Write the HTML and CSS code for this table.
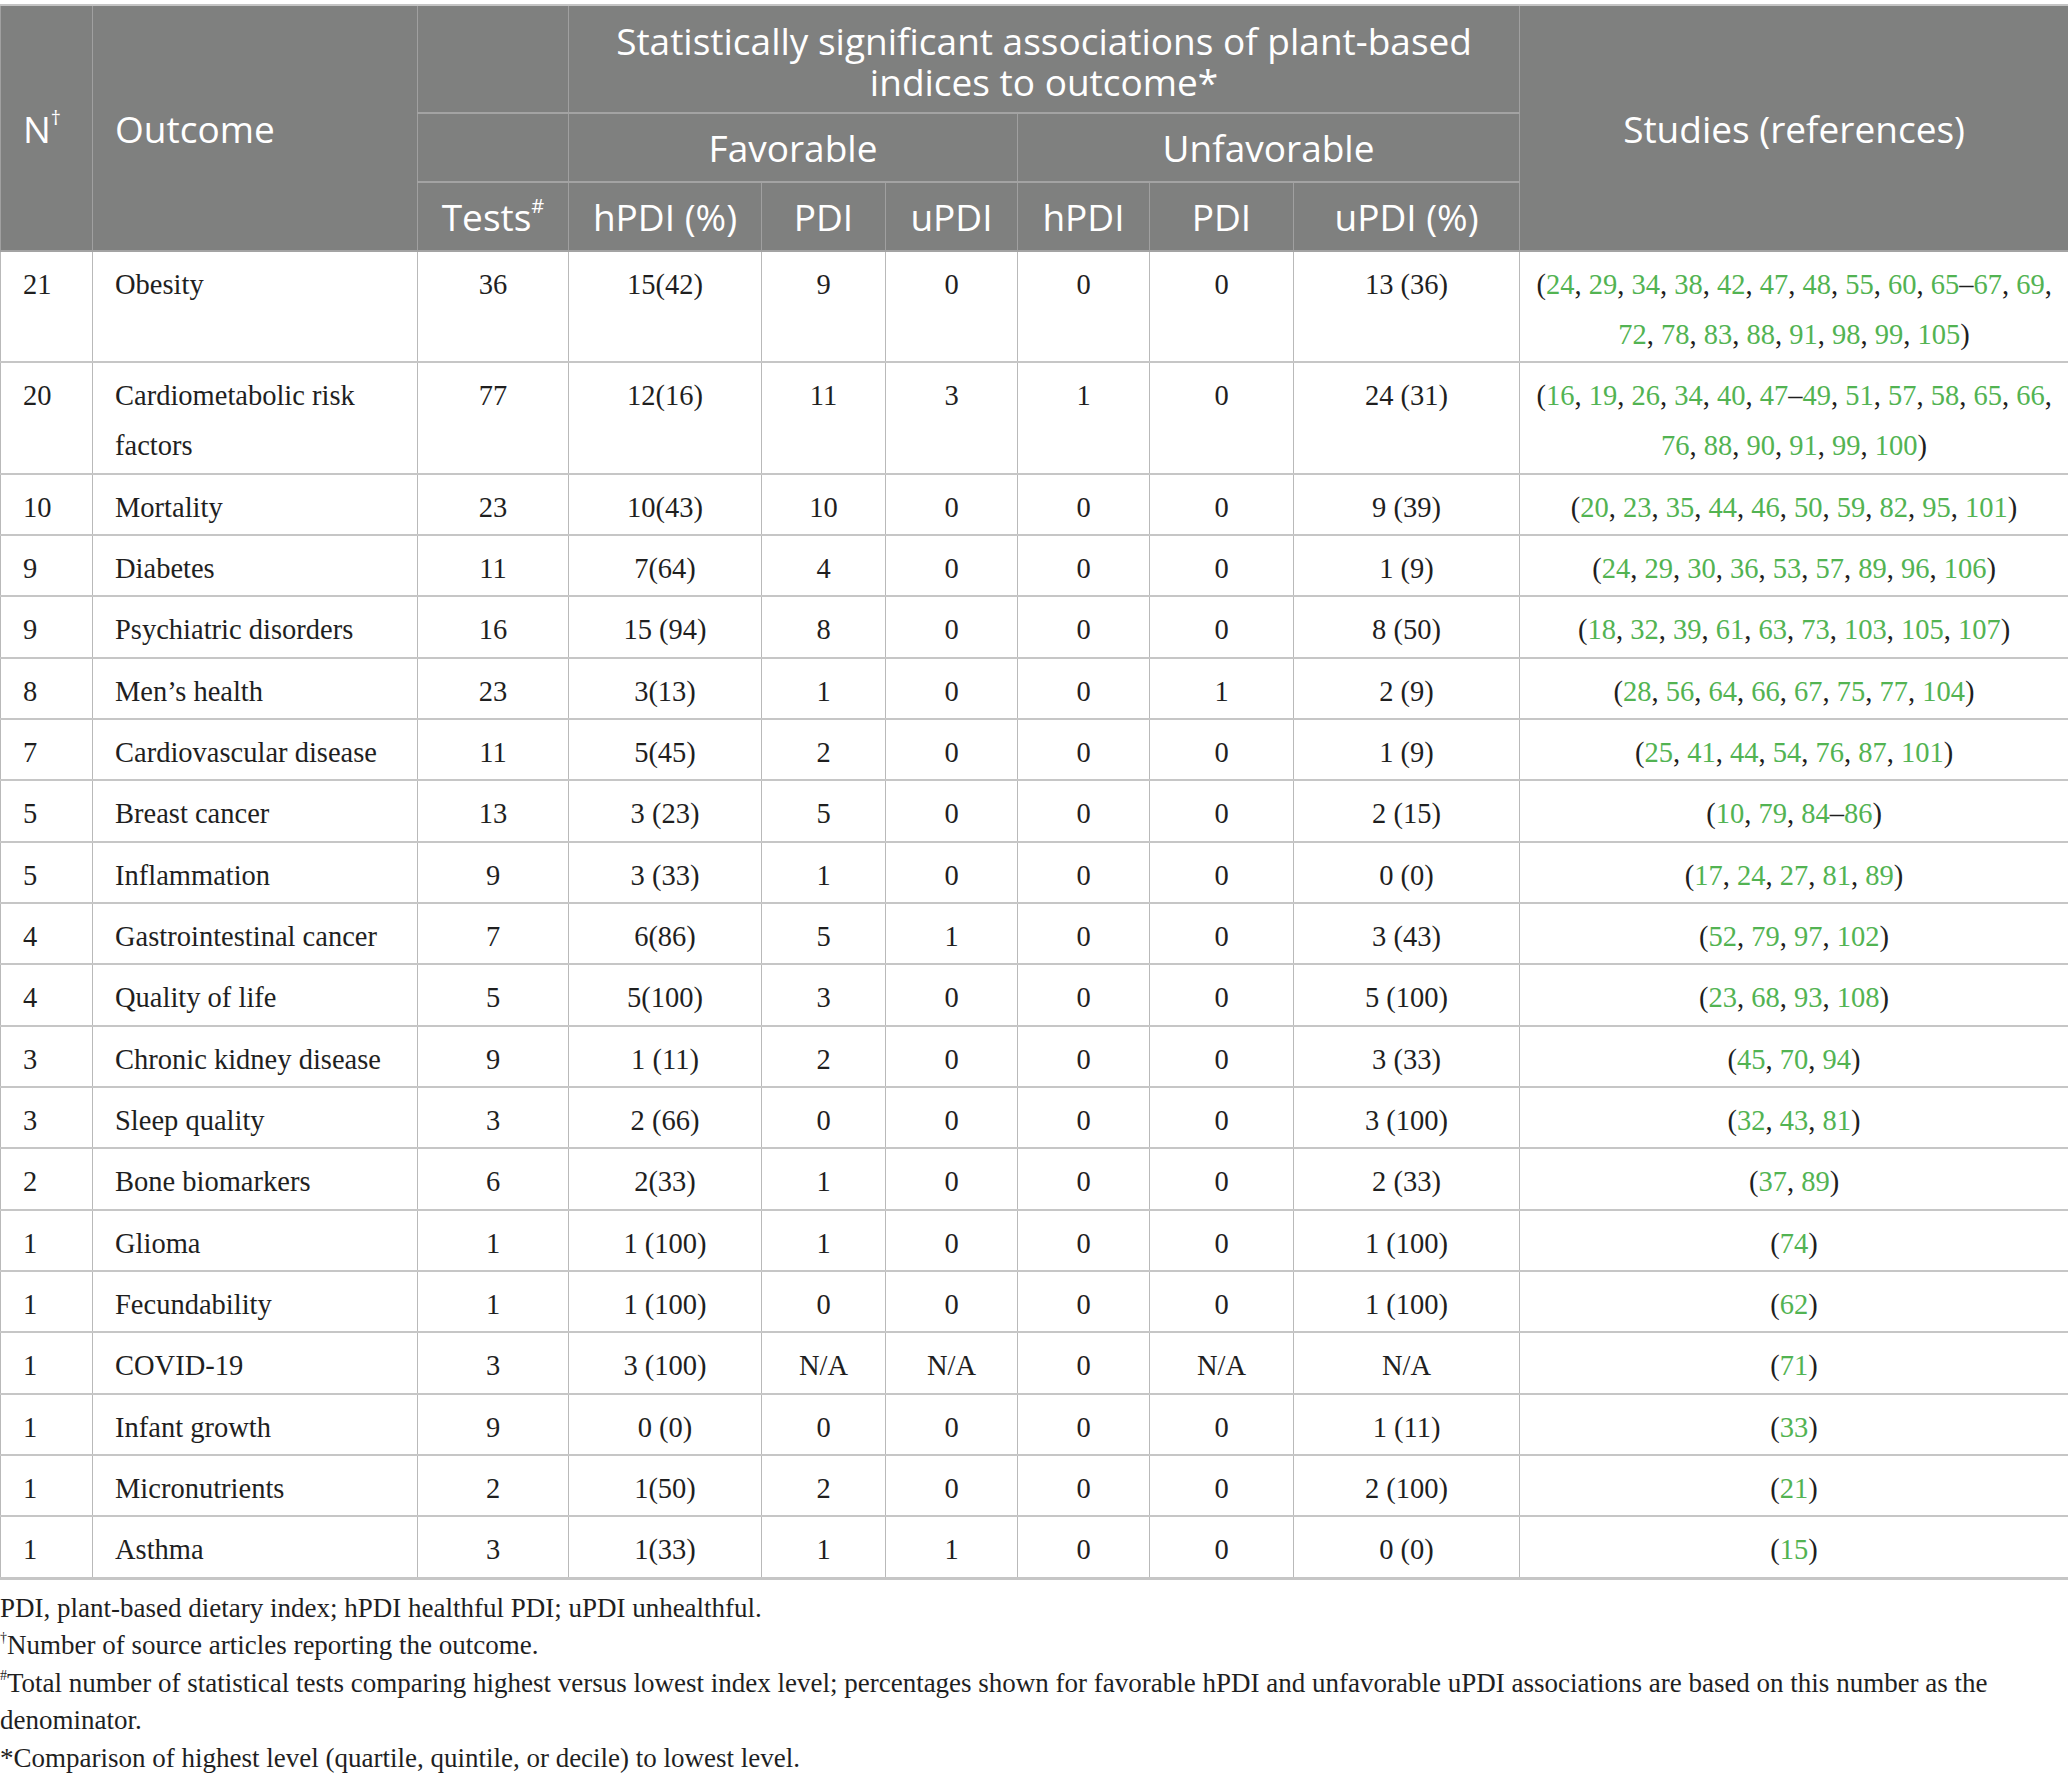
FILE: index.html
```html
<!DOCTYPE html>
<html lang="en">
<head>
<meta charset="utf-8">
<title>Plant-based indices table</title>
<link rel="stylesheet" href="styles.css">
</head>
<body>
<table class="data">
  <colgroup>
    <col class="c-n"><col class="c-out"><col class="c-tests"><col class="c-fh"><col class="c-fp"><col class="c-fu"><col class="c-uh"><col class="c-up"><col class="c-uu"><col class="c-st">
  </colgroup>
  <thead>
    <tr class="h1">
      <th rowspan="3" class="left">N<sup class="hs">†</sup></th>
      <th rowspan="3" class="left">Outcome</th>
      <th class="empty"></th>
      <th colspan="6" class="two"><span class="ln">Statistically significant associations of plant-based</span><span class="ln">indices to outcome*</span></th>
      <th rowspan="3">Studies (references)</th>
    </tr>
    <tr class="h2">
      <th class="empty"></th>
      <th colspan="3">Favorable</th>
      <th colspan="3">Unfavorable</th>
    </tr>
    <tr class="h3">
      <th>Tests<sup class="hs">#</sup></th>
      <th>hPDI (%)</th>
      <th>PDI</th>
      <th>uPDI</th>
      <th>hPDI</th>
      <th>PDI</th>
      <th>uPDI (%)</th>
    </tr>
  </thead>
  <tbody>
    <tr><td class="left">21</td><td class="left">Obesity</td><td>36</td><td>15(42)</td><td>9</td><td>0</td><td>0</td><td>0</td><td>13 (36)</td><td>(<a>24</a>, <a>29</a>, <a>34</a>, <a>38</a>, <a>42</a>, <a>47</a>, <a>48</a>, <a>55</a>, <a>60</a>, <a>65</a>–<a>67</a>, <a>69</a>,<br><a>72</a>, <a>78</a>, <a>83</a>, <a>88</a>, <a>91</a>, <a>98</a>, <a>99</a>, <a>105</a>)</td></tr>
    <tr><td class="left">20</td><td class="left">Cardiometabolic risk<br>factors</td><td>77</td><td>12(16)</td><td>11</td><td>3</td><td>1</td><td>0</td><td>24 (31)</td><td>(<a>16</a>, <a>19</a>, <a>26</a>, <a>34</a>, <a>40</a>, <a>47</a>–<a>49</a>, <a>51</a>, <a>57</a>, <a>58</a>, <a>65</a>, <a>66</a>,<br><a>76</a>, <a>88</a>, <a>90</a>, <a>91</a>, <a>99</a>, <a>100</a>)</td></tr>
    <tr><td class="left">10</td><td class="left">Mortality</td><td>23</td><td>10(43)</td><td>10</td><td>0</td><td>0</td><td>0</td><td>9 (39)</td><td>(<a>20</a>, <a>23</a>, <a>35</a>, <a>44</a>, <a>46</a>, <a>50</a>, <a>59</a>, <a>82</a>, <a>95</a>, <a>101</a>)</td></tr>
    <tr><td class="left">9</td><td class="left">Diabetes</td><td>11</td><td>7(64)</td><td>4</td><td>0</td><td>0</td><td>0</td><td>1 (9)</td><td>(<a>24</a>, <a>29</a>, <a>30</a>, <a>36</a>, <a>53</a>, <a>57</a>, <a>89</a>, <a>96</a>, <a>106</a>)</td></tr>
    <tr><td class="left">9</td><td class="left">Psychiatric disorders</td><td>16</td><td>15 (94)</td><td>8</td><td>0</td><td>0</td><td>0</td><td>8 (50)</td><td>(<a>18</a>, <a>32</a>, <a>39</a>, <a>61</a>, <a>63</a>, <a>73</a>, <a>103</a>, <a>105</a>, <a>107</a>)</td></tr>
    <tr><td class="left">8</td><td class="left">Men’s health</td><td>23</td><td>3(13)</td><td>1</td><td>0</td><td>0</td><td>1</td><td>2 (9)</td><td>(<a>28</a>, <a>56</a>, <a>64</a>, <a>66</a>, <a>67</a>, <a>75</a>, <a>77</a>, <a>104</a>)</td></tr>
    <tr><td class="left">7</td><td class="left">Cardiovascular disease</td><td>11</td><td>5(45)</td><td>2</td><td>0</td><td>0</td><td>0</td><td>1 (9)</td><td>(<a>25</a>, <a>41</a>, <a>44</a>, <a>54</a>, <a>76</a>, <a>87</a>, <a>101</a>)</td></tr>
    <tr><td class="left">5</td><td class="left">Breast cancer</td><td>13</td><td>3 (23)</td><td>5</td><td>0</td><td>0</td><td>0</td><td>2 (15)</td><td>(<a>10</a>, <a>79</a>, <a>84</a>–<a>86</a>)</td></tr>
    <tr><td class="left">5</td><td class="left">Inflammation</td><td>9</td><td>3 (33)</td><td>1</td><td>0</td><td>0</td><td>0</td><td>0 (0)</td><td>(<a>17</a>, <a>24</a>, <a>27</a>, <a>81</a>, <a>89</a>)</td></tr>
    <tr><td class="left">4</td><td class="left">Gastrointestinal cancer</td><td>7</td><td>6(86)</td><td>5</td><td>1</td><td>0</td><td>0</td><td>3 (43)</td><td>(<a>52</a>, <a>79</a>, <a>97</a>, <a>102</a>)</td></tr>
    <tr><td class="left">4</td><td class="left">Quality of life</td><td>5</td><td>5(100)</td><td>3</td><td>0</td><td>0</td><td>0</td><td>5 (100)</td><td>(<a>23</a>, <a>68</a>, <a>93</a>, <a>108</a>)</td></tr>
    <tr><td class="left">3</td><td class="left">Chronic kidney disease</td><td>9</td><td>1 (11)</td><td>2</td><td>0</td><td>0</td><td>0</td><td>3 (33)</td><td>(<a>45</a>, <a>70</a>, <a>94</a>)</td></tr>
    <tr><td class="left">3</td><td class="left">Sleep quality</td><td>3</td><td>2 (66)</td><td>0</td><td>0</td><td>0</td><td>0</td><td>3 (100)</td><td>(<a>32</a>, <a>43</a>, <a>81</a>)</td></tr>
    <tr><td class="left">2</td><td class="left">Bone biomarkers</td><td>6</td><td>2(33)</td><td>1</td><td>0</td><td>0</td><td>0</td><td>2 (33)</td><td>(<a>37</a>, <a>89</a>)</td></tr>
    <tr><td class="left">1</td><td class="left">Glioma</td><td>1</td><td>1 (100)</td><td>1</td><td>0</td><td>0</td><td>0</td><td>1 (100)</td><td>(<a>74</a>)</td></tr>
    <tr><td class="left">1</td><td class="left">Fecundability</td><td>1</td><td>1 (100)</td><td>0</td><td>0</td><td>0</td><td>0</td><td>1 (100)</td><td>(<a>62</a>)</td></tr>
    <tr><td class="left">1</td><td class="left">COVID-19</td><td>3</td><td>3 (100)</td><td>N/A</td><td>N/A</td><td>0</td><td>N/A</td><td>N/A</td><td>(<a>71</a>)</td></tr>
    <tr><td class="left">1</td><td class="left">Infant growth</td><td>9</td><td>0 (0)</td><td>0</td><td>0</td><td>0</td><td>0</td><td>1 (11)</td><td>(<a>33</a>)</td></tr>
    <tr><td class="left">1</td><td class="left">Micronutrients</td><td>2</td><td>1(50)</td><td>2</td><td>0</td><td>0</td><td>0</td><td>2 (100)</td><td>(<a>21</a>)</td></tr>
    <tr><td class="left">1</td><td class="left">Asthma</td><td>3</td><td>1(33)</td><td>1</td><td>1</td><td>0</td><td>0</td><td>0 (0)</td><td>(<a>15</a>)</td></tr>
  </tbody>
</table>
<div class="notes">
  <p>PDI, plant-based dietary index; hPDI healthful PDI; uPDI unhealthful.</p>
  <p><sup class="fs">†</sup>Number of source articles reporting the outcome.</p>
  <p><sup class="fs">#</sup>Total number of statistical tests comparing highest versus lowest index level; percentages shown for favorable hPDI and unfavorable uPDI associations are based on this number as the<br>denominator.</p>
  <p>*Comparison of highest level (quartile, quintile, or decile) to lowest level.</p>
</div>
</body>
</html>
```
FILE: styles.css
```css
html, body {
  margin: 0;
  padding: 0;
  background: #ffffff;
}

body {
  width: 2068px;
  font-family: "Liberation Serif", "Times New Roman", serif;
  color: #1f1f1f;
}

.data {
  margin-top: 4px;
  width: 2068px;
  table-layout: fixed;
  border-collapse: collapse;
}

.c-n { width: 92px; }
.c-out { width: 325px; }
.c-tests { width: 151px; }
.c-fh { width: 193px; }
.c-fp { width: 124px; }
.c-fu { width: 132px; }
.c-uh { width: 132px; }
.c-up { width: 144px; }
.c-uu { width: 226px; }
.c-st { width: 549px; }

.data th {
  background: #7f807f;
  color: #ffffff;
  font-family: "Open Sans", "Noto Sans", sans-serif;
  font-weight: 400;
  font-size: 37px;
  line-height: 41px;
  text-align: center;
  vertical-align: middle;
  padding: 0 10px;
  border-top: 2px solid #a3a3a3;
  border-bottom: 2px solid #a3a3a3;
  border-left: 1px solid #a0a0a0;
  border-right: 1px solid #a0a0a0;
}

.data thead tr:first-child th {
  border-top: 2px solid #c4c4c4;
}

.data th.left {
  text-align: left;
  padding-left: 22px;
}

.data tr.h1 { height: 108px; }
.data tr.h2 { height: 69px; }
.data tr.h3 { height: 69px; }

.data th.two {
  padding-top: 4px;
}

.ln {
  display: block;
  height: 41px;
  line-height: 41px;
  overflow: visible;
}

.hs {
  font-size: 20px;
  vertical-align: top;
  line-height: 1;
  position: relative;
  top: 0;
}

.data td {
  font-size: 28.5px;
  line-height: 50px;
  text-align: center;
  vertical-align: top;
  padding: 8px 10px 1.33px;
  border-top: 2px solid #c6c6c6;
  border-bottom: 2px solid #c6c6c6;
  border-left: 1px solid #b9b9b9;
  border-right: 1px solid #b9b9b9;
}

.data td.left {
  text-align: left;
  padding-left: 22px;
}

.data a {
  color: #52b352;
  text-decoration: none;
}

.data tbody tr:last-child td {
  border-bottom: 3px solid #c6c6c6;
}

.notes {
  margin-top: 10px;
  font-size: 27px;
  line-height: 37.6px;
}

.notes p {
  margin: 0;
}

.fs {
  font-size: 14px;
  vertical-align: top;
  line-height: 1;
  position: relative;
  top: 4px;
}
```
